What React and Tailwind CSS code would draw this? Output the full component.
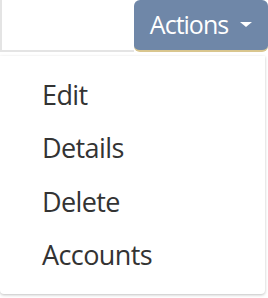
import React from "react";

const items = ["Edit", "Details", "Delete", "Accounts"];

export default function App() {
  return (
    <div
      className="w-[268px] h-[298px] bg-white overflow-hidden"
      style={{ fontFamily: '"Open Sans", "Noto Sans", sans-serif' }}
    >
      {/* top bar */}
      <div className="flex h-[52px]">
        <div className="flex-1 border-b-2 border-l-2 border-[#e4e4e4]" />
        <button className="w-[134px] h-[52px] flex items-center justify-center gap-[12px] bg-[#6f87a8] text-white text-[25px] rounded-md border-b-2 border-[#d9c68e]">
          <span className="tracking-[-1px]">Actions</span>
          <span className="w-0 h-0 border-l-[6.5px] border-r-[6.5px] border-t-[5px] border-l-transparent border-r-transparent border-t-white -mt-[2px]" />
        </button>
      </div>

      {/* menu */}
      <div className="mt-[4px] w-[265px] h-[238px] bg-white rounded-b shadow-[0_1px_3px_rgba(0,0,0,0.25)] pt-[12px] flex flex-col">
        {items.map((item) => (
          <a
            key={item}
            href="#"
            className="h-[53.5px] shrink-0 flex items-center pl-[42px] text-[27px] text-[#333] tracking-[-0.6px]"
          >
            {item}
          </a>
        ))}
      </div>
    </div>
  );
}
